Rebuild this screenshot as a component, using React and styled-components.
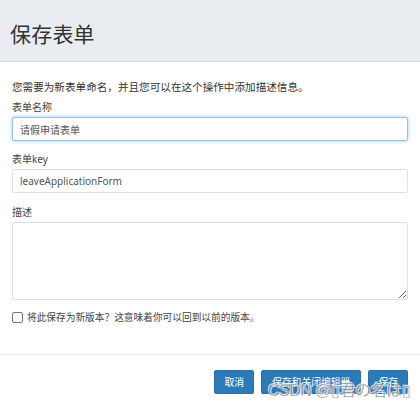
import React, { useState } from 'react';
import styled, { createGlobalStyle } from 'styled-components';

const GlobalStyle = createGlobalStyle`
  html, body {
    margin: 0;
    padding: 0;
    background: #ffffff;
  }
  body {
    font-family: "Noto Sans", "Noto Sans CJK SC", sans-serif;
    color: #333333;
  }
`;

const Modal = styled.div`
  position: relative;
  width: 420px;
  height: 409px;
  background: #ffffff;
  overflow: hidden;
`;

const Header = styled.div`
  height: 62px;
  background: #e9edf1;
  border-bottom: 1px solid #d3d8dd;
  display: flex;
  align-items: center;
  padding: 0 10px;
  box-sizing: border-box;
`;

const Title = styled.h3`
  margin: 4px 0 0 0;
  font-size: 21px;
  font-weight: 400;
  color: #333333;
  letter-spacing: 0.2px;
`;

const Body = styled.div`
  padding: 14px 12px 0 12px;
  height: 293px;
  box-sizing: border-box;
  border-bottom: 1px solid #eeeeee;
`;

const Intro = styled.p`
  margin: 4px 0 6px 0;
  font-size: 10.6px;
  line-height: 14px;
  color: #333333;
`;

const Field = styled.div`
  margin-bottom: ${p => p.gap ?? 11}px;
`;

const Label = styled.label`
  display: block;
  font-size: 10px;
  line-height: 14px;
  margin-bottom: 3px;
  color: #444444;
`;

const Input = styled.input`
  display: block;
  width: 100%;
  height: 24px;
  box-sizing: border-box;
  padding: 0 7px;
  font-family: "Noto Sans", "Noto Sans CJK SC", sans-serif;
  font-size: 10px;
  color: #555555;
  border: 1px solid ${p => (p.focused ? '#8fc1ea' : '#e0e0e0')};
  border-radius: 2px;
  box-shadow: ${p => (p.focused ? '0 0 4px rgba(102, 175, 233, 0.6)' : 'none')};
  outline: none;
  background: #ffffff;
`;

const TextArea = styled.textarea`
  display: block;
  width: 100%;
  height: 78px;
  box-sizing: border-box;
  border: 1px solid #e0e0e0;
  border-radius: 2px;
  resize: vertical;
  outline: none;
  font-family: "Noto Sans", "Noto Sans CJK SC", sans-serif;
  font-size: 10px;
`;

const CheckRow = styled.label`
  display: flex;
  align-items: center;
  gap: 4px;
  font-size: 9.7px;
  color: #444444;
  margin-top: 10px;
`;

const CheckBox = styled.span`
  width: 11px;
  height: 11px;
  border: 1px solid #767676;
  border-radius: 2px;
  box-sizing: border-box;
  background: #ffffff;
`;

const Footer = styled.div`
  display: flex;
  justify-content: flex-end;
  gap: 7px;
  padding: 15px 12px 0 12px;
`;

const Button = styled.button`
  height: 24px;
  padding: 0 ${p => p.pad || 9}px;
  border: 1px solid #2a6fa6;
  border-radius: 2px;
  background: #2d7ab9;
  color: #ffffff;
  font-family: "Noto Sans", "Noto Sans CJK SC", sans-serif;
  font-size: 9.8px;
  cursor: pointer;
`;

const Watermark = styled.div`
  position: absolute;
  left: 268px;
  top: 377px;
  font-family: "Liberation Sans", "Noto Sans CJK JP", sans-serif;
  font-size: 16px;
  letter-spacing: -0.5px;
  color: rgba(110, 110, 110, 0.8);
  -webkit-text-stroke: 0.3px rgba(255, 255, 255, 0.9);
  text-shadow: 1px 1px 0 rgba(255, 255, 255, 0.7), -1px -1px 0 rgba(255, 255, 255, 0.7);
  pointer-events: none;
  white-space: nowrap;
`;

export default function App() {
  const [name, setName] = useState('请假申请表单');
  const [key, setKey] = useState('leaveApplicationForm');

  return (
    <Modal>
      <GlobalStyle />
      <Header>
        <Title>保存表单</Title>
      </Header>
      <Body>
        <Intro>您需要为新表单命名，并且您可以在这个操作中添加描述信息。</Intro>
        <Field>
          <Label>表单名称</Label>
          <Input focused value={name} onChange={e => setName(e.target.value)} />
        </Field>
        <Field gap={12}>
          <Label>表单key</Label>
          <Input value={key} onChange={e => setKey(e.target.value)} />
        </Field>
        <Field gap={0}>
          <Label>描述</Label>
          <TextArea />
        </Field>
        <CheckRow>
          <CheckBox />
          将此保存为新版本？这意味着你可以回到以前的版本。
        </CheckRow>
      </Body>
      <Footer>
        <Button>取消</Button>
        <Button pad={10}>保存和关闭编辑器</Button>
        <Button>保存</Button>
      </Footer>
      <Watermark>CSDN @▯君の名は▯</Watermark>
    </Modal>
  );
}
